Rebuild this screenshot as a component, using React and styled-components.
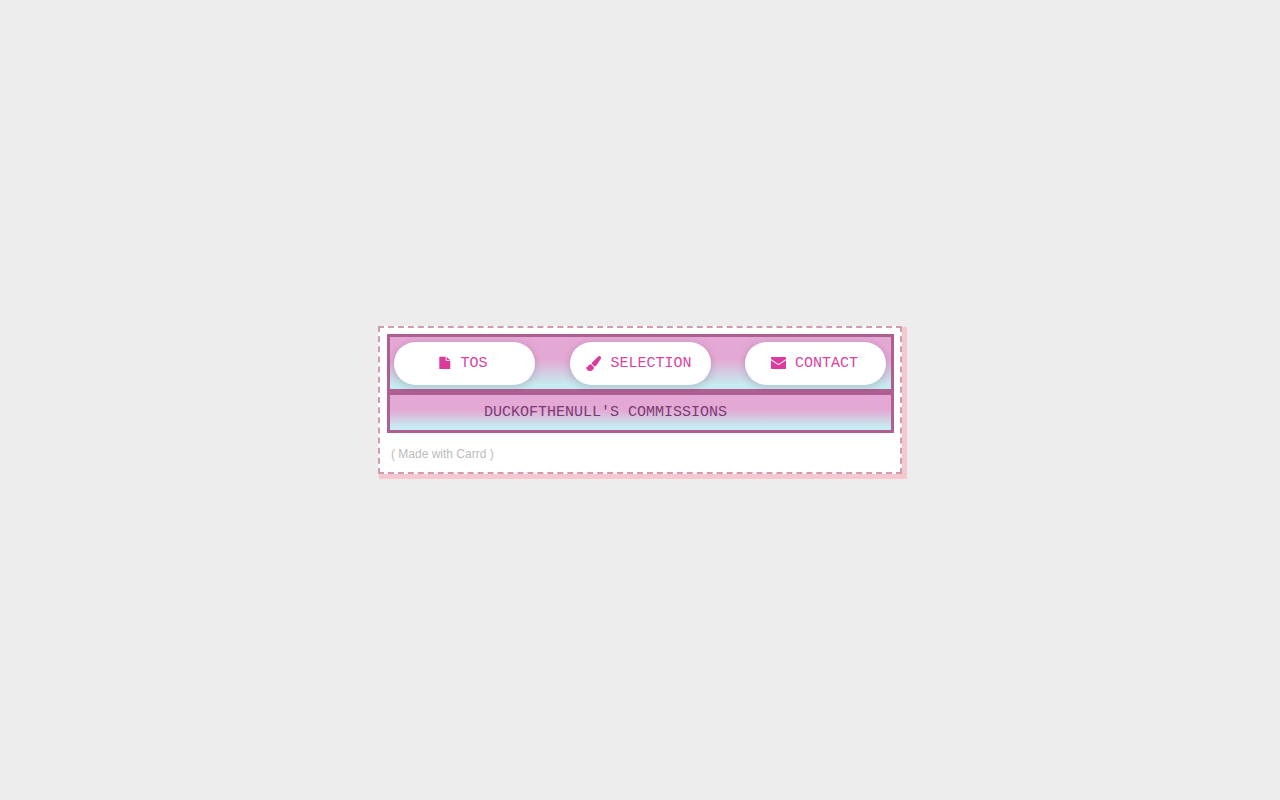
import React from "react";
import styled, { createGlobalStyle } from "styled-components";

const GlobalStyle = createGlobalStyle`
  * {
    box-sizing: border-box;
  }

  body {
    margin: 0;
    background: #ededed;
  }
`;

const Page = styled.main`
  display: flex;
  align-items: center;
  justify-content: center;
  min-height: 100vh;
`;

const Card = styled.section`
  width: 100%;
  max-width: 524px;
  padding: 6px 6px 9px 7px;
  background: #ffffff;
  border: 2px dashed #d29bb4;
  box-shadow: 3px 3px 0 2px #f5c8cd;
`;

const Panel = styled.div`
  border: 3px solid #b05f92;
  background: linear-gradient(#e4a8d4 42%, #c5ecf0 92%);
`;

const NavPanel = styled(Panel)`
  padding: 5px 5px 4px 4px;
`;

const Nav = styled.nav`
  display: flex;
  justify-content: space-between;
`;

const NavLink = styled.a`
  display: flex;
  align-items: center;
  justify-content: center;
  gap: 9px;
  width: 141px;
  height: 43px;
  padding-right: 2px;
  border-radius: 22px;
  background: #ffffff;
  box-shadow: 0 2px 8px rgba(60, 30, 70, 0.22);
  color: #d9449f;
  font-family: "Liberation Mono", monospace;
  font-size: 15px;
  line-height: 20px;
  text-decoration: none;
`;

const Icon = styled.svg`
  flex: none;
  margin-bottom: 1px;
  fill: #dd3b9c;
`;

const Title = styled.h1`
  margin: 0;
  padding: 8px 70px 7px 0;
  color: #7c3a74;
  font-family: "Liberation Mono", monospace;
  font-size: 15px;
  font-weight: 400;
  line-height: 20px;
  text-align: center;
`;

const Credit = styled.p`
  margin: 12px 0 0;
  padding-left: 4px;
  color: #bcbcbc;
  font-family: "Liberation Sans", sans-serif;
  font-size: 12px;
  line-height: 18px;
`;

const CreditLink = styled.a`
  color: inherit;
  text-decoration: none;
`;

function FileIcon() {
  return (
    <Icon width="12" height="14" viewBox="0 0 12 14" aria-hidden="true">
      <path d="M1 .7h5.700v3.400q0 .9.900.9H11.300V12.400q0 .6-.6.6H.9q-.6 0-.6-.6V1.300Q.3.700 1 .7z" />
      <path d="M7.600.8L11.200 4.200H7.600z" />
    </Icon>
  );
}

function BrushIcon() {
  return (
    <Icon width="15" height="15" viewBox="0 0 15 15" aria-hidden="true">
      <path d="M14.500.5c.7.600.6 1.500.2 2.400L10.500 9.300c-.6.900-1.300 1.200-2 1.100L5.700 7.700c0-.7.300-1.300.9-1.800L12.200.6c.7-.6 1.700-.7 2.300-.1z" />
      <path d="M5.100 8.300l2.700 2.600c.2 2.500-1.600 4.100-3.900 4.100C1.500 15 .1 13.200 0 10.700c.9.700 1.400.7 1.800.1.500-1.500 1.500-2.500 3.300-2.500z" />
    </Icon>
  );
}

function MailIcon() {
  return (
    <Icon width="15" height="12" viewBox="0 0 15 12" aria-hidden="true">
      <path d="M.8 0h13.400q.8 0 .8.800v1.100L8.500 6.500q-1 .7-2 0L0 1.900V.8Q0 0 .8 0z" />
      <path d="M0 3.200l5.900 4.100q1.600 1.100 3.200 0L15 3.200v8q0 .8-.8.800H.8q-.8 0-.8-.8z" />
    </Icon>
  );
}

const links = [
  { id: "tos", label: "TOS", icon: FileIcon },
  { id: "selection", label: "SELECTION", icon: BrushIcon },
  { id: "contact", label: "CONTACT", icon: MailIcon },
];

function App() {
  return (
    <>
      <GlobalStyle />
      <Page>
        <Card>
          <NavPanel>
            <Nav>
              {links.map(({ id, label, icon: LinkIcon }) => (
                <NavLink key={id} href={`#${id}`}>
                  <LinkIcon />
                  {label}
                </NavLink>
              ))}
            </Nav>
          </NavPanel>
          <Panel>
            <Title>DUCKOFTHENULL'S COMMISSIONS</Title>
          </Panel>
          <Credit>
            <CreditLink href="#carrd">( Made with Carrd )</CreditLink>
          </Credit>
        </Card>
      </Page>
    </>
  );
}

export default App;
